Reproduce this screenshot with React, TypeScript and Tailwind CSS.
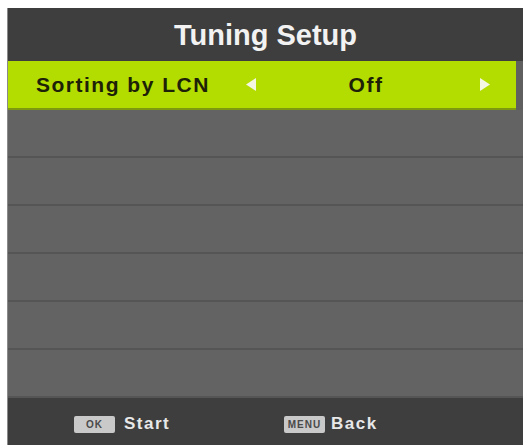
const rows = [0, 1, 2, 3, 4, 5];

function Arrow({ dir }: { dir: 'left' | 'right' }) {
  return (
    <svg width="12" height="15" viewBox="0 0 12 15" className="shrink-0">
      {dir === 'left' ? (
        <polygon points="11,1 11,14 1,7.5" fill="#f4f7e4" />
      ) : (
        <polygon points="1,1 1,14 11,7.5" fill="#f4f7e4" />
      )}
    </svg>
  );
}

function KeyCap({ label }: { label: string }) {
  return (
    <span className="flex h-[17px] w-[41px] items-center justify-center rounded-[2px] bg-[#c9c9c9] text-[10px] font-bold tracking-[1px] text-[#4a4a4a]">
      {label}
    </span>
  );
}

export default function App() {
  return (
    <div
      className="h-[448px] w-[526px] bg-white pl-[7px] pr-[3px] pt-[8px]"
      style={{ fontFamily: '"Liberation Sans", Arial, sans-serif' }}
    >
      <div className="flex h-[437px] flex-col bg-[#5f5f5f] border-l border-[#8a8a8a]">
        <div className="flex h-[53px] items-center justify-center pt-[2px] bg-[#3e3e3e] text-[29px] font-bold text-[#f2f2f2]">
          Tuning Setup
        </div>

        <div className="flex h-[49px] items-center bg-[#b3dc00] pl-[28px] pr-[25px] mr-[7px] border-b-2 border-[#7e9a10] text-[21px] font-bold tracking-[1.5px] text-[#1c2108]">
          <span className="w-[209px]">Sorting by LCN</span>
          <Arrow dir="left" />
          <span className="flex-1 text-center pr-[4px]">Off</span>
          <Arrow dir="right" />
        </div>

        <div className="flex flex-1 flex-col">
          {rows.map((r) => (
            <div
              key={r}
              className="flex-1 border-b-2 border-[#555555] bg-[#636363]"
            />
          ))}
        </div>

        <div className="flex h-[47px] items-center bg-[#3e3e3e] pl-[66px] pt-[5px] text-[17px] font-bold tracking-[1.5px] text-[#e8e8e8]">
          <div className="flex w-[210px] items-center gap-[9px]">
            <KeyCap label="OK" />
            <span>Start</span>
          </div>
          <div className="flex items-center gap-[6px]">
            <KeyCap label="MENU" />
            <span>Back</span>
          </div>
        </div>
      </div>
    </div>
  );
}
